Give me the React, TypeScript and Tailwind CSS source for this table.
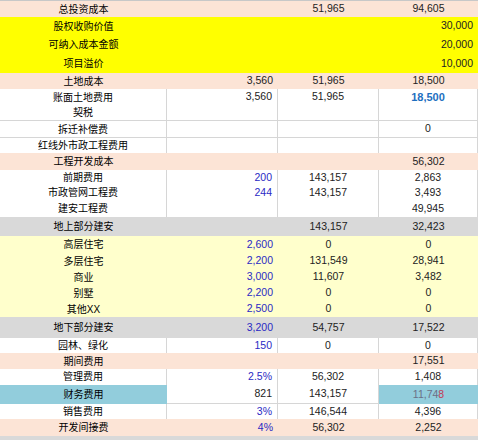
import React from 'react'

type Tone = 'peach' | 'yellow' | 'cream' | 'gray' | 'white' | 'blue'

type Row = {
  label: string
  h: number
  tone: Tone
  a?: string
  b?: string
  c?: React.ReactNode
  aBlue?: boolean
  cRight?: boolean
  cBold?: boolean
}

const rows: Row[] = [
  { label: '总投资成本', h: 16, tone: 'peach', b: '51,965', c: '94,605' },
  { label: '股权收购价值', h: 18, tone: 'yellow', c: '30,000', cRight: true },
  { label: '可纳入成本金额', h: 19, tone: 'yellow', c: '20,000', cRight: true },
  { label: '项目溢价', h: 19, tone: 'yellow', c: '10,000', cRight: true },
  { label: '土地成本', h: 16, tone: 'peach', a: '3,560', b: '51,965', c: '18,500' },
  { label: '账面土地费用', h: 16, tone: 'white', a: '3,560', b: '51,965', c: '18,500', cBold: true },
  { label: '契税', h: 16, tone: 'white' },
  { label: '拆迁补偿费', h: 17, tone: 'white', c: '0' },
  { label: '红线外市政工程费用', h: 15, tone: 'white' },
  { label: '工程开发成本', h: 17, tone: 'peach', c: '56,302' },
  { label: '前期费用', h: 15, tone: 'white', a: '200', aBlue: true, b: '143,157', c: '2,863' },
  { label: '市政管网工程费', h: 16, tone: 'white', a: '244', aBlue: true, b: '143,157', c: '3,493' },
  { label: '建安工程费', h: 16, tone: 'white', c: '49,945' },
  { label: '地上部分建安', h: 19, tone: 'gray', b: '143,157', c: '32,423' },
  { label: '高层住宅', h: 17, tone: 'cream', a: '2,600', aBlue: true, b: '0', c: '0' },
  { label: '多层住宅', h: 16, tone: 'cream', a: '2,200', aBlue: true, b: '131,549', c: '28,941' },
  { label: '商业', h: 16, tone: 'cream', a: '3,000', aBlue: true, b: '11,607', c: '3,482' },
  { label: '别墅', h: 16, tone: 'cream', a: '2,200', aBlue: true, b: '0', c: '0' },
  { label: '其他XX', h: 16, tone: 'cream', a: '2,500', aBlue: true, b: '0', c: '0' },
  { label: '地下部分建安', h: 21, tone: 'gray', a: '3,200', aBlue: true, b: '54,757', c: '17,522' },
  { label: '园林、绿化', h: 15, tone: 'white', a: '150', aBlue: true, b: '0', c: '0' },
  { label: '期间费用', h: 16, tone: 'peach', c: '17,551' },
  { label: '管理费用', h: 16, tone: 'white', a: '2.5%', aBlue: true, b: '56,302', c: '1,408' },
  {
    label: '财务费用',
    h: 19,
    tone: 'blue',
    a: '821',
    b: '143,157',
    c: (
      <span className="text-[#6b6f86]">
        11,74<span className="text-[#c23a55]">8</span>
      </span>
    ),
  },
  { label: '销售费用', h: 15, tone: 'white', a: '3%', aBlue: true, b: '146,544', c: '4,396' },
  { label: '开发间接费', h: 17, tone: 'peach', a: '4%', aBlue: true, b: '56,302', c: '2,252' },
]

const fills: Record<Tone, string> = {
  peach: 'bg-[#fce4d6]',
  yellow: 'bg-[#ffff00]',
  cream: 'bg-[#ffffcc]',
  gray: 'bg-[#d9d9d9]',
  white: 'bg-white border-r border-b border-[#d6d6d6]',
  blue: 'bg-[#92cddc]',
}

const numFont = { fontFamily: '"Liberation Sans", Arial, sans-serif' }
const cjkFont = { fontFamily: '"Liberation Sans", "Noto Sans CJK SC", sans-serif' }

function SheetRow({ row }: { row: Row }) {
  const side = row.tone === 'blue' ? 'white' : row.tone
  return (
    <div className="grid grid-cols-[167px_111px_101px_99px]" style={{ height: row.h }}>
      <div className={`flex items-center justify-center text-[10px] text-black ${fills[row.tone]}`} style={cjkFont}>
        {row.label}
      </div>
      <div
        className={`flex items-center justify-end pr-[5px] text-[10.5px] ${row.aBlue ? 'text-[#2a2ac4]' : 'text-[#222]'} ${fills[side]}`}
        style={numFont}
      >
        {row.a}
      </div>
      <div className={`flex items-center justify-center text-[10.5px] text-[#222] ${fills[side]}`} style={numFont}>
        {row.b}
      </div>
      <div
        className={`flex items-center text-[10.5px] ${row.cRight ? 'justify-end pr-[5px]' : 'justify-center'} ${
          row.cBold ? 'font-bold text-[11px] text-[#1e6fbf]' : 'text-[#222]'
        } ${fills[row.tone]}`}
        style={numFont}
      >
        {row.c}
      </div>
    </div>
  )
}

export default function App() {
  return (
    <main className="h-[440px] w-[480px] overflow-hidden bg-white">
      <div className="w-[478px] border-t border-[#c8c8c8]">
        {rows.map((row) => (
          <SheetRow key={row.label} row={row} />
        ))}
        <div className="h-[5px] bg-[#d9d9d9]" />
      </div>
    </main>
  )
}
